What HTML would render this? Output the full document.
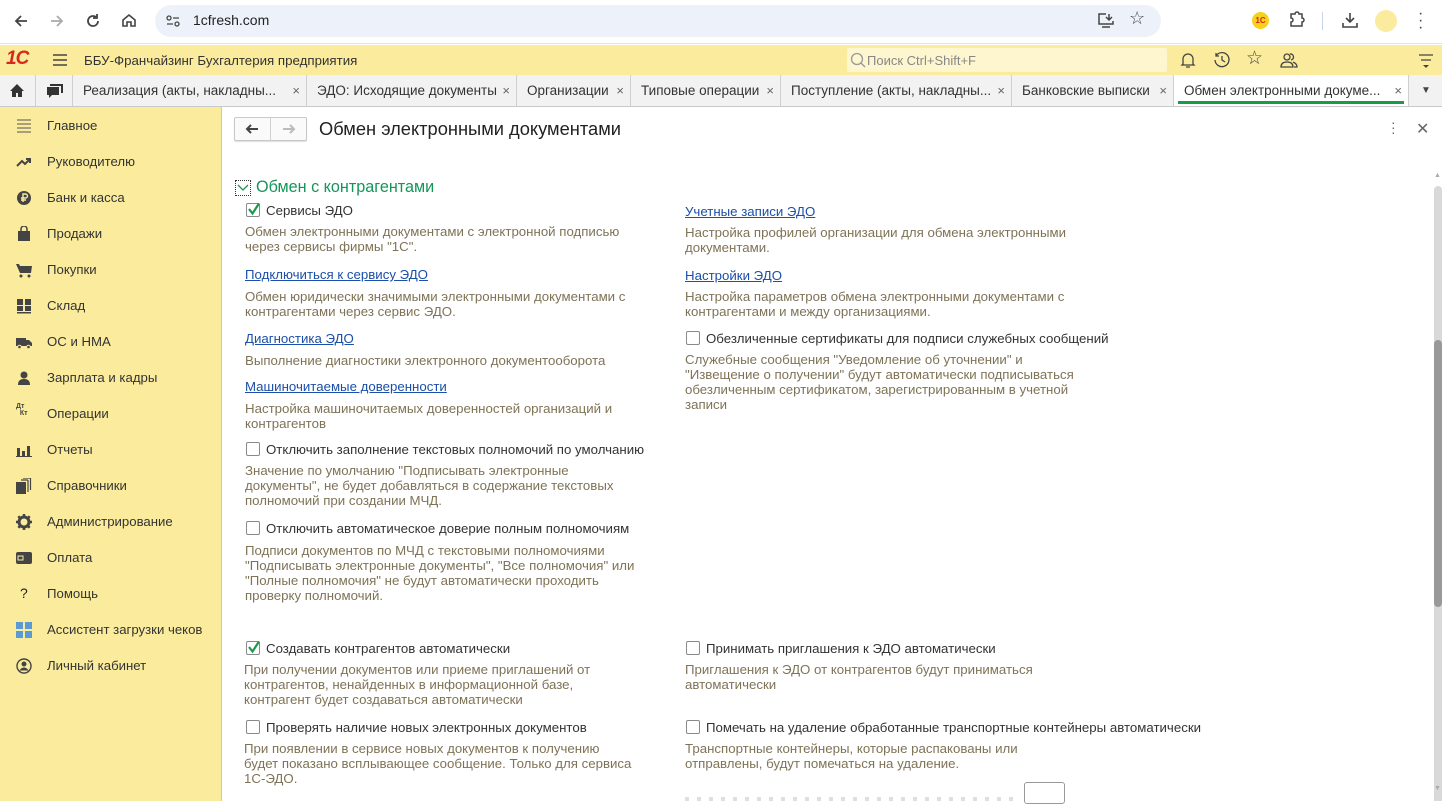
<!DOCTYPE html>
<html><head><meta charset="utf-8">
<style>
*{box-sizing:border-box;margin:0;padding:0}
body{width:1442px;height:801px;overflow:hidden;position:relative;background:#fff;font-family:"Liberation Sans",Arial,sans-serif;color:#333}
.a{position:absolute;white-space:nowrap}
#chrome{position:absolute;left:0;top:0;width:1442px;height:44px;background:#fff;border-bottom:1px solid #e3e3e3}
#url{position:absolute;left:155px;top:5px;width:1006px;height:32px;border-radius:16px;background:#edf2fa}
#hdr{position:absolute;left:0;top:45px;width:1442px;height:30px;background:#fbec9d}
#tabs{position:absolute;left:0;top:75px;width:1442px;height:32px;background:#f2f2f2;border-bottom:1px solid #c9c9c9}
.tab{position:absolute;top:0;height:31px;border-right:1px solid #cfcfcf;font-size:13.5px;line-height:32px;color:#333;padding-left:10px}
.tab .x{position:absolute;right:6px;top:0;color:#666;font-size:13px}
#side{position:absolute;left:0;top:107px;width:222px;height:694px;background:#fbec9d;border-right:1px solid #d9c979}
.si{position:absolute;left:47px;font-size:13.2px;color:#333}
.ic{position:absolute;left:16px;width:16px;height:16px}
.lbl{position:absolute;font-size:13.25px;color:#333;white-space:nowrap}
.d{position:absolute;font-size:13.25px;line-height:15px;color:#7f7357;white-space:nowrap}
.lnk{position:absolute;font-size:13.25px;color:#1b4fa8;text-decoration:underline;white-space:nowrap}
.cb{position:absolute;width:14px;height:14px;border:1px solid #8a8a8a;border-radius:2px;background:#fff}
.cb svg{position:absolute;left:0;top:-2px}
</style></head><body>
<div id="chrome">
 <svg class="a" style="left:12px;top:12px" width="18" height="18" viewBox="0 0 18 18"><path d="M15 9H4M9 4L4 9l5 5" fill="none" stroke="#444" stroke-width="1.8"/></svg>
 <svg class="a" style="left:48px;top:12px" width="18" height="18" viewBox="0 0 18 18"><path d="M3 9h11M9 4l5 5-5 5" fill="none" stroke="#aaa" stroke-width="1.8"/></svg>
 <svg class="a" style="left:84px;top:12px" width="18" height="18" viewBox="0 0 18 18"><path d="M14 9a5 5 0 1 1-2-4M13 2v4h-4" fill="none" stroke="#444" stroke-width="1.8"/></svg>
 <svg class="a" style="left:120px;top:11px" width="18" height="18" viewBox="0 0 18 18"><path d="M3 9l6-5 6 5v6h-4v-4H7v4H3z" fill="none" stroke="#444" stroke-width="1.6"/></svg>
 <div id="url"></div>
 <svg class="a" style="left:166px;top:14px" width="14" height="14" viewBox="0 0 14 14"><circle cx="3" cy="4" r="2" fill="none" stroke="#444" stroke-width="1.3"/><path d="M7 4h6M1 10h6" stroke="#444" stroke-width="1.3"/><circle cx="11" cy="10" r="2" fill="none" stroke="#444" stroke-width="1.3"/></svg>
 <div class="a" style="left:193px;top:12px;font-size:14px;color:#222">1cfresh.com</div>
 <svg class="a" style="left:1097px;top:12px" width="18" height="18" viewBox="0 0 18 18"><path d="M9 2H2v10h14V9M5 15h8M12 2v6M9 5l3 3 3-3" fill="none" stroke="#444" stroke-width="1.5"/></svg>
 <div class="a" style="left:1129px;top:8px;font-size:18px;color:#444">☆</div>
 <div class="a" style="left:1252px;top:12px;width:17px;height:17px;border-radius:50%;background:#f5d21b;color:#d8271c;font-size:8px;font-weight:bold;line-height:17px;text-align:center">1C</div>
 <svg class="a" style="left:1288px;top:11px" width="18" height="18" viewBox="0 0 18 18"><path d="M3 3h4a2 2 0 0 1 4 0h3v4a2 2 0 0 1 0 4v4H3v-4a2 2 0 0 0 0-4z" fill="none" stroke="#444" stroke-width="1.5"/></svg>
 <div class="a" style="left:1322px;top:12px;width:1px;height:18px;background:#c9d3e8"></div>
 <svg class="a" style="left:1341px;top:11px" width="18" height="18" viewBox="0 0 18 18"><path d="M9 2v9M5 7l4 4 4-4M2 12v4h14v-4" fill="none" stroke="#444" stroke-width="1.6"/></svg>
 <div class="a" style="left:1375px;top:10px;width:22px;height:22px;border-radius:50%;background:#faeb9f"></div>
 <div class="a" style="left:1418px;top:10px;font-size:16px;color:#444;line-height:7px;width:4px">·<br>·<br>·</div>
</div>
<div id="hdr">
 <div class="a" style="left:6px;top:3px;font-size:19px;font-weight:bold;color:#d8271c;letter-spacing:-1px;font-style:italic">1&#1057;</div>
 <svg class="a" style="left:52px;top:8px" width="16" height="14" viewBox="0 0 16 14"><path d="M1 2h14M1 7h14M1 12h14" stroke="#444" stroke-width="1.4"/></svg>
 <div class="a" style="left:84px;top:8px;font-size:13.3px;color:#333">ББУ-Франчайзинг Бухгалтерия предприятия</div>
 <div class="a" style="left:847px;top:3px;width:320px;height:24px;background:#fdf6cf;border-radius:2px"></div>
 <svg class="a" style="left:850px;top:7px" width="16" height="16" viewBox="0 0 16 16"><circle cx="7" cy="7" r="5.5" fill="none" stroke="#999" stroke-width="1.3"/><path d="M11 11l4 4" stroke="#999" stroke-width="1.3"/></svg>
 <div class="a" style="left:867px;top:8px;font-size:13px;color:#888">Поиск Ctrl+Shift+F</div>
 <svg class="a" style="left:1179px;top:6px" width="18" height="18" viewBox="0 0 18 18"><path d="M4 13V8a5 5 0 0 1 10 0v5l1 1H3zM7 16h4" fill="none" stroke="#444" stroke-width="1.3"/></svg>
 <svg class="a" style="left:1213px;top:6px" width="18" height="18" viewBox="0 0 18 18"><path d="M3 5a7 7 0 1 1-1 4M3 2v3h3M9 5v4l3 2" fill="none" stroke="#444" stroke-width="1.3"/></svg>
 <div class="a" style="left:1246px;top:2px;font-size:19px;color:#444">☆</div>
 <svg class="a" style="left:1280px;top:6px" width="18" height="18" viewBox="0 0 18 18"><circle cx="7" cy="6" r="3" fill="none" stroke="#444" stroke-width="1.3"/><path d="M1 16c0-4 3-5 6-5s6 1 6 5zM10 3a3 3 0 0 1 1 6M13 11c2 1 4 2 4 5h-3" fill="none" stroke="#444" stroke-width="1.3"/></svg>
 <svg class="a" style="left:1418px;top:8px" width="16" height="16" viewBox="0 0 16 16"><path d="M1 2h14M3 7h10" stroke="#444" stroke-width="1.3"/><path d="M5 12h6l-3 3z" fill="#444"/></svg>
</div>
<div id="tabs">
 <div class="tab" style="left:0;width:36px;padding:0"><svg class="a" style="left:9px;top:8px" width="16" height="15" viewBox="0 0 16 15"><path d="M8 1L1 8h2v6h4v-4h2v4h4V8h2z" fill="#333"/></svg></div>
 <div class="tab" style="left:36px;width:37px;padding:0"><svg class="a" style="left:10px;top:8px" width="18" height="16" viewBox="0 0 18 16"><path d="M4 1h13v9h-2V3H4z" fill="#333"/><path d="M1 4h12v8H6l-3 3v-3H1z" fill="#333"/></svg></div>
 <div class="tab" style="left:73px;width:234px">Реализация (акты, накладны...<span class="x">×</span></div>
 <div class="tab" style="left:307px;width:210px">ЭДО: Исходящие документы<span class="x">×</span></div>
 <div class="tab" style="left:517px;width:114px">Организации<span class="x">×</span></div>
 <div class="tab" style="left:631px;width:150px">Типовые операции<span class="x">×</span></div>
 <div class="tab" style="left:781px;width:231px">Поступление (акты, накладны...<span class="x">×</span></div>
 <div class="tab" style="left:1012px;width:162px">Банковские выписки<span class="x">×</span></div>
 <div class="tab" style="left:1174px;width:235px;background:#fff">Обмен электронными докуме...<span class="x">×</span><div class="a" style="left:4px;bottom:2px;height:3px;background:#1a9a4a;width:calc(100% - 8px)"></div></div>
 <div class="tab" style="left:1409px;width:33px;border-right:none;padding:0"><div class="a" style="left:12px;top:0;font-size:10px;color:#444">▼</div></div>
</div>
<div id="side">
 <svg class="ic" style="top:11px" viewBox="0 0 16 16"><path d="M1 2h14M1 6h14M1 10h14M1 14h14" stroke="#555" stroke-width="1"/></svg><div class="si" style="top:11px">Главное</div>
 <svg class="ic" style="top:47px" viewBox="0 0 16 16"><path d="M1 12l5-5 3 3 5-5M10 5h4v4" fill="none" stroke="#444" stroke-width="2"/></svg><div class="si" style="top:47px">Руководителю</div>
 <svg class="ic" style="top:83px" viewBox="0 0 16 16"><circle cx="8" cy="8" r="7" fill="#444"/><path d="M7 12V4h2.5a2 2 0 0 1 0 4H5M5 10h5" fill="none" stroke="#fbec9d" stroke-width="1.4"/></svg><div class="si" style="top:83px">Банк и касса</div>
 <svg class="ic" style="top:119px" viewBox="0 0 16 16"><path d="M2 5h12v10H2z" fill="#444"/><path d="M5 7V3a3 3 0 0 1 6 0v4" fill="none" stroke="#444" stroke-width="1.5"/></svg><div class="si" style="top:119px">Продажи</div>
 <svg class="ic" style="top:155px" viewBox="0 0 16 16"><path d="M0 2h3l1 2h12l-1 7H4z" fill="#444"/><circle cx="5" cy="14" r="1.5" fill="#444"/><circle cx="13" cy="14" r="1.5" fill="#444"/></svg><div class="si" style="top:155px">Покупки</div>
 <svg class="ic" style="top:191px" viewBox="0 0 16 16"><path d="M1 1h6v6H1zM9 1h6v6H9zM1 8h6v5H1zM9 8h6v5H9zM1 14h14v1.5H1z" fill="#444"/></svg><div class="si" style="top:191px">Склад</div>
 <svg class="ic" style="top:227px" viewBox="0 0 16 16"><path d="M0 4h10v8H0zM10 6h3l3 3v3h-6z" fill="#444"/><circle cx="3.5" cy="13" r="1.8" fill="#444" stroke="#fbec9d"/><circle cx="12.5" cy="13" r="1.8" fill="#444" stroke="#fbec9d"/></svg><div class="si" style="top:227px">ОС и НМА</div>
 <svg class="ic" style="top:263px" viewBox="0 0 16 16"><circle cx="8" cy="5" r="3.5" fill="#444"/><path d="M2 15c0-5 3-6 6-6s6 1 6 6z" fill="#444"/></svg><div class="si" style="top:263px">Зарплата и кадры</div>
 <div class="a" style="left:16px;top:296px;font-size:7px;font-weight:bold;color:#444;line-height:7px">Дт<br>&nbsp;&nbsp;Кт</div><div class="si" style="top:299px">Операции</div>
 <svg class="ic" style="top:335px" viewBox="0 0 16 16"><path d="M1 6h3v8H1zM6 9h3v5H6zM11 4h3v10h-3zM0 14h16v1H0z" fill="#444"/></svg><div class="si" style="top:335px">Отчеты</div>
 <svg class="ic" style="top:371px" viewBox="0 0 16 16"><path d="M0 4h10v12H0z" fill="#444"/><path d="M12 2v12M14.5 0v12M5 2h7M7 0h7" stroke="#444" stroke-width="1.2" fill="none"/></svg><div class="si" style="top:371px">Справочники</div>
 <svg class="ic" style="top:407px" viewBox="0 0 16 16"><circle cx="8" cy="8" r="5" fill="none" stroke="#444" stroke-width="3"/><path d="M8 0v3M8 13v3M0 8h3M13 8h3M2.3 2.3l2 2M11.7 11.7l2 2M2.3 13.7l2-2M11.7 4.3l2-2" stroke="#444" stroke-width="2.5"/></svg><div class="si" style="top:407px">Администрирование</div>
 <svg class="ic" style="top:443px" viewBox="0 0 16 16"><rect x="0" y="2" width="16" height="12" rx="2" fill="#444"/><rect x="2" y="6" width="5" height="4" fill="none" stroke="#fbec9d"/></svg><div class="si" style="top:443px">Оплата</div>
 <div class="a" style="left:20px;top:478px;font-size:14px;color:#222">?</div><div class="si" style="top:479px">Помощь</div>
 <svg class="ic" style="top:515px" viewBox="0 0 16 16"><path d="M0 0h7v7H0zM9 0h7v7H9zM0 9h7v7H0zM9 9h7v7H9z" fill="#5b9bd5"/></svg><div class="si" style="top:515px">Ассистент загрузки чеков</div>
 <svg class="ic" style="top:551px" viewBox="0 0 16 16"><circle cx="8" cy="8" r="7" fill="none" stroke="#444" stroke-width="1.4"/><circle cx="8" cy="6" r="2.5" fill="#444"/><path d="M3.5 12.5c1-2 3-3 4.5-3s3.5 1 4.5 3" fill="#444"/></svg><div class="si" style="top:551px">Личный кабинет</div>
</div>
<div class="a" style="left:234px;top:117px;width:73px;height:24px;border:1px solid #c8c8c8;border-radius:2px;background:#fafafa;box-shadow:0 1px 1px #ddd"></div>
<div class="a" style="left:270px;top:117px;width:1px;height:24px;background:#d0d0d0"></div>
<svg class="a" style="left:245px;top:123px" width="14" height="12" viewBox="0 0 14 12"><path d="M13 6H3M6 2L2 6l4 4" fill="none" stroke="#444" stroke-width="2"/></svg>
<svg class="a" style="left:282px;top:123px" width="14" height="12" viewBox="0 0 14 12"><path d="M1 6h10M8 2l4 4-4 4" fill="none" stroke="#bbb" stroke-width="2"/></svg>
<div class="a" style="left:319px;top:118px;font-size:18.3px;color:#222">Обмен электронными документами</div>
<div class="a" style="left:1391px;top:120px;font-size:14px;color:#666;line-height:5px;width:4px">·<br>·<br>·</div>
<div class="a" style="left:1416px;top:119px;font-size:16px;color:#666">✕</div>
<div class="a" style="left:1434px;top:172px;font-size:7px;color:#aaa">▲</div>
<div class="a" style="left:1434px;top:186px;width:8px;height:615px;background:#d9d9d9;border-radius:4px 4px 0 0"></div>
<div class="a" style="left:1434px;top:340px;width:8px;height:267px;background:#999;border-radius:4px"></div>
<div class="a" style="left:1434px;top:785px;font-size:7px;color:#aaa">▼</div>
<div class="a" style="left:235px;top:180px;width:16px;height:16px;border:1px dotted #333"></div>
<svg class="a" style="left:237px;top:184px" width="12" height="8" viewBox="0 0 12 8"><path d="M1 1l5 5 5-5" fill="none" stroke="#1a9a4a" stroke-width="1.3"/></svg>
<div class="a" style="left:256px;top:178px;font-size:16.2px;color:#15955a">Обмен с контрагентами</div>
<div class="cb" style="left:246px;top:203px"><svg width="14" height="14" viewBox="0 0 14 14"><path d="M2 7l3.5 4.5L12 1.5" fill="none" stroke="#1a9a4a" stroke-width="2.2"/></svg></div>
<div class="lbl" style="left:266px;top:203px">Сервисы ЭДО</div>
<div class="d" style="left:245px;top:224px">Обмен электронными документами с электронной подписью<br>через сервисы фирмы "1С".</div>
<div class="lnk" style="left:245px;top:267px">Подключиться к сервису ЭДО</div>
<div class="d" style="left:245px;top:289px">Обмен юридически значимыми электронными документами с<br>контрагентами через сервис ЭДО.</div>
<div class="lnk" style="left:245px;top:331px">Диагностика ЭДО</div>
<div class="d" style="left:245px;top:353px">Выполнение диагностики электронного документооборота</div>
<div class="lnk" style="left:245px;top:379px">Машиночитаемые доверенности</div>
<div class="d" style="left:245px;top:401px">Настройка машиночитаемых доверенностей организаций и<br>контрагентов</div>
<div class="cb" style="left:246px;top:442px"></div>
<div class="lbl" style="left:266px;top:442px">Отключить заполнение текстовых полномочий по умолчанию</div>
<div class="d" style="left:245px;top:463px">Значение по умолчанию "Подписывать электронные<br>документы", не будет добавляться в содержание текстовых<br>полномочий при создании МЧД.</div>
<div class="cb" style="left:246px;top:521px"></div>
<div class="lbl" style="left:266px;top:521px">Отключить автоматическое доверие полным полномочиям</div>
<div class="d" style="left:245px;top:543px">Подписи документов по МЧД с текстовыми полномочиями<br>"Подписывать электронные документы", "Все полномочия" или<br>"Полные полномочия" не будут автоматически проходить<br>проверку полномочий.</div>
<div class="cb" style="left:246px;top:641px"><svg width="14" height="14" viewBox="0 0 14 14"><path d="M2 7l3.5 4.5L12 1.5" fill="none" stroke="#1a9a4a" stroke-width="2.2"/></svg></div>
<div class="lbl" style="left:266px;top:641px">Создавать контрагентов автоматически</div>
<div class="d" style="left:244px;top:662px">При получении документов или приеме приглашений от<br>контрагентов, ненайденных в информационной базе,<br>контрагент будет создаваться автоматически</div>
<div class="cb" style="left:246px;top:720px"></div>
<div class="lbl" style="left:266px;top:720px">Проверять наличие новых электронных документов</div>
<div class="d" style="left:244px;top:741px">При появлении в сервисе новых документов к получению<br>будет показано всплывающее сообщение. Только для сервиса<br>1С-ЭДО.</div>
<div class="lnk" style="left:685px;top:204px">Учетные записи ЭДО</div>
<div class="d" style="left:685px;top:225px">Настройка профилей организации для обмена электронными<br>документами.</div>
<div class="lnk" style="left:685px;top:268px">Настройки ЭДО</div>
<div class="d" style="left:685px;top:289px">Настройка параметров обмена электронными документами с<br>контрагентами и между организациями.</div>
<div class="cb" style="left:686px;top:331px"></div>
<div class="lbl" style="left:706px;top:331px">Обезличенные сертификаты для подписи служебных сообщений</div>
<div class="d" style="left:685px;top:352px">Служебные сообщения "Уведомление об уточнении" и<br>"Извещение о получении" будут автоматически подписываться<br>обезличенным сертификатом, зарегистрированным в учетной<br>записи</div>
<div class="cb" style="left:686px;top:641px"></div>
<div class="lbl" style="left:706px;top:641px">Принимать приглашения к ЭДО автоматически</div>
<div class="d" style="left:685px;top:662px">Приглашения к ЭДО от контрагентов будут приниматься<br>автоматически</div>
<div class="cb" style="left:686px;top:720px"></div>
<div class="lbl" style="left:706px;top:720px">Помечать на удаление обработанные транспортные контейнеры автоматически</div>
<div class="d" style="left:685px;top:741px">Транспортные контейнеры, которые распакованы или<br>отправлены, будут помечаться на удаление.</div>
<div class="a" style="left:685px;top:797px;width:330px;height:4px;background:repeating-linear-gradient(90deg,#8a7f66 0 4px,transparent 4px 12px);opacity:.25"></div>
<div class="a" style="left:1024px;top:782px;width:41px;height:22px;border:1px solid #999;border-radius:3px;background:#fff"></div>
</body></html>
